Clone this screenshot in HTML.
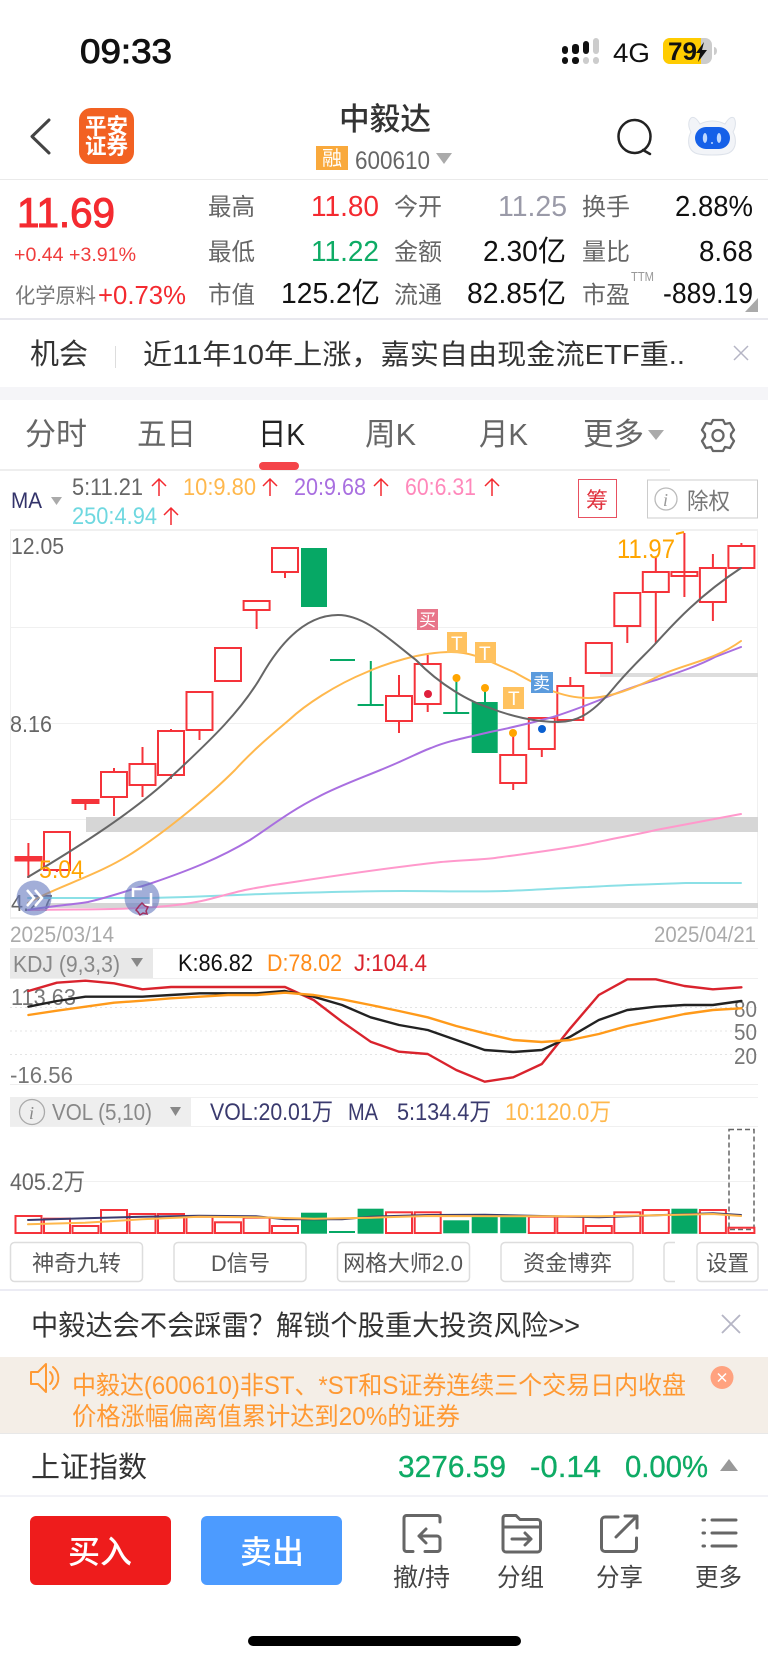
<!DOCTYPE html>
<html lang="zh-CN">
<head>
<meta charset="utf-8">
<title>中毅达</title>
<style>
html,body{margin:0;padding:0;background:#fff;width:768px;height:1663px;overflow:hidden}
svg{display:block;font-family:"Liberation Sans","Noto Sans CJK SC",sans-serif}
.ma{fill:none;stroke-width:2;stroke-linejoin:round;stroke-linecap:round}
.k{fill:none;stroke-width:2.400;stroke-linejoin:round;stroke-linecap:round}
</style>
</head>
<body>
<svg width="768" height="1663" viewBox="0 0 768 1663" xmlns="http://www.w3.org/2000/svg">
<rect width="768" height="1663" fill="#fff"/>

<!-- status bar -->
<text x="80" y="63" font-size="34" fill="#111" stroke="#111" stroke-width=".9" textLength="92" lengthAdjust="spacingAndGlyphs">09:33</text>
<g fill="#111">
<rect x="562" y="46" width="6" height="8" rx="3"/><rect x="562" y="57" width="6" height="7" rx="3"/>
<rect x="572" y="44" width="7" height="10" rx="3"/><rect x="572" y="57" width="7" height="7" rx="3"/>
<rect x="583" y="41" width="6" height="13" rx="3"/>
</g>
<g fill="#ccc">
<rect x="583" y="57" width="6" height="7" rx="3"/>
<rect x="593" y="38" width="6" height="16" rx="3"/><rect x="593" y="57" width="6" height="7" rx="3"/>
</g>
<text x="613" y="62" font-size="27" fill="#111" textLength="37" lengthAdjust="spacingAndGlyphs">4G</text>
<rect x="663" y="38" width="49" height="26" rx="7" fill="#ccc"/>
<path d="M670 38H701V64H670a7 7 0 0 1-7-7V45a7 7 0 0 1 7-7z" fill="#FFCC00"/>
<path d="M714 47a3 4 0 0 1 0 8z" fill="#ccc"/>
<text x="668" y="60" font-size="25" font-weight="700" fill="#111" textLength="29" lengthAdjust="spacingAndGlyphs">79</text>
<path d="M704 42L696 53H700L698 62L707 50H702z" fill="#111"/>

<!-- header -->
<path d="M49 120L32 136.500L49 153" fill="none" stroke="#444" stroke-width="3" stroke-linecap="round" stroke-linejoin="round"/>
<rect x="79" y="108" width="55" height="56" rx="12" fill="#F26122"/>
<text x="85" y="134" font-size="22" font-weight="700" fill="#fff" textLength="43" lengthAdjust="spacingAndGlyphs">平安</text>
<text x="85" y="154" font-size="22" font-weight="700" fill="#fff" textLength="43" lengthAdjust="spacingAndGlyphs">证券</text>
<text x="339" y="130" font-size="31" font-weight="500" fill="#333" textLength="92" lengthAdjust="spacingAndGlyphs">中毅达</text>
<rect x="316" y="146" width="32" height="24" fill="#F9A93C"/>
<text x="322" y="165" font-size="20" fill="#fff">融</text>
<text x="355" y="169" font-size="25" fill="#666" textLength="75" lengthAdjust="spacingAndGlyphs">600610</text>
<path d="M436 153H452L444 164z" fill="#aaa"/>
<ellipse cx="634.500" cy="136.500" rx="16" ry="16.500" fill="none" stroke="#222" stroke-width="2.500"/>
<path d="M643 150L650 154" stroke="#222" stroke-width="2.500" stroke-linecap="round"/>
<!-- robot -->
<path d="M691 118c3-2 6 1 9 6c8-4 17-4 25 0c3-5 6-8 9-6c2 3 2 9-1 14c3 5 3 12 1 16c-3 6-9 7-22 7s-19-1-22-7c-2-4-2-11 1-16c-3-5-3-11 0-14z" fill="#F2F4F8" stroke="#DDE2EA"/>
<rect x="695" y="127" width="35" height="22" rx="11" fill="#1560E8"/>
<ellipse cx="705" cy="138" rx="2.200" ry="5" fill="#BFD8FF"/>
<ellipse cx="719" cy="138" rx="2.200" ry="5" fill="#BFD8FF"/>
<circle cx="712" cy="143" r="1" fill="#BFD8FF"/>
<rect y="179" width="768" height="1" fill="#eaeaea"/>

<!-- quote -->
<text x="17" y="227" font-size="42" fill="#F42A30" stroke="#F42A30" stroke-width="1.100" textLength="98" lengthAdjust="spacingAndGlyphs">11.69</text>
<text x="14" y="261" font-size="19" fill="#F03C3C" textLength="122" lengthAdjust="spacingAndGlyphs">+0.44 +3.91%</text>
<text x="15" y="303" font-size="21" fill="#777" textLength="81" lengthAdjust="spacingAndGlyphs">化学原料</text>
<text x="98" y="304" font-size="26" fill="#F42A30" textLength="88" lengthAdjust="spacingAndGlyphs">+0.73%</text>
<g font-size="24" fill="#666">
<text x="208" y="215" textLength="47" lengthAdjust="spacingAndGlyphs">最高</text>
<text x="208" y="260" textLength="47" lengthAdjust="spacingAndGlyphs">最低</text>
<text x="208" y="303" textLength="47" lengthAdjust="spacingAndGlyphs">市值</text>
<text x="394" y="215" textLength="48" lengthAdjust="spacingAndGlyphs">今开</text>
<text x="394" y="260" textLength="48" lengthAdjust="spacingAndGlyphs">金额</text>
<text x="394" y="303" textLength="48" lengthAdjust="spacingAndGlyphs">流通</text>
<text x="582" y="215" textLength="48" lengthAdjust="spacingAndGlyphs">换手</text>
<text x="582" y="260" textLength="48" lengthAdjust="spacingAndGlyphs">量比</text>
<text x="582" y="303" textLength="48" lengthAdjust="spacingAndGlyphs">市盈</text>
</g>
<g font-size="29">
<text x="311" y="216" fill="#F42A30" textLength="68" lengthAdjust="spacingAndGlyphs">11.80</text>
<text x="311" y="261" fill="#0EAB65" textLength="68" lengthAdjust="spacingAndGlyphs">11.22</text>
<text x="281" y="303" fill="#111" textLength="99" lengthAdjust="spacingAndGlyphs">125.2亿</text>
<text x="498" y="216" fill="#9A9AA8" textLength="69" lengthAdjust="spacingAndGlyphs">11.25</text>
<text x="483" y="261" fill="#111" textLength="83" lengthAdjust="spacingAndGlyphs">2.30亿</text>
<text x="467" y="303" fill="#111" textLength="99" lengthAdjust="spacingAndGlyphs">82.85亿</text>
<text x="675" y="216" fill="#111" textLength="78" lengthAdjust="spacingAndGlyphs">2.88%</text>
<text x="699" y="261" fill="#111" textLength="54" lengthAdjust="spacingAndGlyphs">8.68</text>
<text x="663" y="303" fill="#111" textLength="90" lengthAdjust="spacingAndGlyphs">-889.19</text>
</g>
<text x="631" y="281" font-size="13" fill="#999" textLength="23" lengthAdjust="spacingAndGlyphs">TTM</text>
<path d="M745 312H758V298z" fill="#aaa"/>
<rect y="318" width="768" height="2" fill="#E8E8EE"/>

<!-- news -->
<text x="30" y="364" font-size="29" fill="#333" textLength="58" lengthAdjust="spacingAndGlyphs">机会</text>
<rect x="115" y="346" width="1" height="22" fill="#ddd"/>
<text x="143" y="364" font-size="28" fill="#333" textLength="542" lengthAdjust="spacingAndGlyphs">近11年10年上涨，嘉实自由现金流ETF重..</text>
<path d="M734 346L748 360M748 346L734 360" stroke="#B5B5C5" stroke-width="1.500"/>
<rect y="387" width="768" height="13" fill="#F5F5F8"/>

<!-- tabs -->
<g font-size="31" fill="#666">
<text x="25" y="445" textLength="62" lengthAdjust="spacingAndGlyphs">分时</text>
<text x="137" y="445" textLength="59" lengthAdjust="spacingAndGlyphs">五日</text>
<text x="258" y="445" fill="#222" textLength="47" lengthAdjust="spacingAndGlyphs">日K</text>
<text x="365" y="445" textLength="51" lengthAdjust="spacingAndGlyphs">周K</text>
<text x="479" y="445" textLength="49" lengthAdjust="spacingAndGlyphs">月K</text>
<text x="583" y="445" textLength="61" lengthAdjust="spacingAndGlyphs">更多</text>
</g>
<path d="M648 430H664L656 440z" fill="#aaa"/>
<path d="M713 420h10l2 4 5-1 4 7-3 4v3l3 4-4 7-5-1-2 4h-10l-2-4-5 1-4-7 3-4v-3l-3-4 4-7 5 1z" fill="none" stroke="#666" stroke-width="2.300" stroke-linejoin="round"/>
<circle cx="718" cy="435.500" r="5.500" fill="none" stroke="#666" stroke-width="2.300"/>
<rect y="469" width="670" height="2" fill="#eee"/>
<rect x="259" y="462" width="40" height="8" rx="4" fill="#F44449"/>

<!-- MA legend -->
<text x="11" y="508" font-size="22" fill="#33336A" textLength="31" lengthAdjust="spacingAndGlyphs">MA</text>
<path d="M51 497H62L56.500 505z" fill="#aaa"/>
<g font-size="24">
<text x="72" y="495" fill="#666" textLength="71" lengthAdjust="spacingAndGlyphs">5:11.21</text>
<text x="183" y="495" fill="#FFB84D" textLength="73" lengthAdjust="spacingAndGlyphs">10:9.80</text>
<text x="294" y="495" fill="#A96FE0" textLength="72" lengthAdjust="spacingAndGlyphs">20:9.68</text>
<text x="405" y="495" fill="#FF88BB" textLength="71" lengthAdjust="spacingAndGlyphs">60:6.31</text>
<text x="72" y="524" fill="#6FD8E0" textLength="85" lengthAdjust="spacingAndGlyphs">250:4.94</text>
</g>
<g fill="none" stroke="#F42A30" stroke-width="1.500">
<path d="M159 479V496M152 486L159 479L166 486"/>
<path d="M270 479V496M263 486L270 479L277 486"/>
<path d="M381 479V496M374 486L381 479L388 486"/>
<path d="M492 479V496M485 486L492 479L499 486"/>
<path d="M171 508V525M164 515L171 508L178 515"/>
</g>
<rect x="578.500" y="479.500" width="38" height="38" fill="#fff" stroke="#E85060"/>
<text x="586" y="508" font-size="22" fill="#E0303C">筹</text>
<rect x="647.500" y="480" width="110" height="38" fill="#fff" stroke="#ccc"/>
<circle cx="666" cy="499" r="11" fill="none" stroke="#bbb" stroke-width="1.300"/>
<text x="663" y="506" font-size="18" font-style="italic" font-family="Liberation Serif,serif" fill="#999">i</text>
<text x="687" y="509" font-size="23" fill="#777" textLength="43" lengthAdjust="spacingAndGlyphs">除权</text>

<!-- chart grid -->
<g fill="#F0F0F0">
<rect x="10" y="529" width="748" height="2"/>
<rect x="10" y="627" width="748" height="1"/>
<rect x="10" y="723" width="748" height="1"/>
<rect x="10" y="819" width="748" height="1"/>
<rect x="10" y="917" width="748" height="2"/>
<rect x="10" y="530" width="1" height="388"/>
<rect x="757" y="530" width="1" height="388"/>
</g>
<rect x="600" y="673" width="158" height="4" fill="#DDD"/>
<rect x="86" y="817" width="672" height="15" fill="#D6D6D6"/>
<rect x="48" y="903" width="710" height="5" fill="#D6D6D6"/>
<g font-size="23" fill="#666">
<text x="11" y="554" textLength="53" lengthAdjust="spacingAndGlyphs">12.05</text>
<text x="10" y="732" textLength="42" lengthAdjust="spacingAndGlyphs">8.16</text>
<text x="11" y="911" textLength="42" lengthAdjust="spacingAndGlyphs">4.27</text>
</g>

<!-- candles -->
<g stroke="#F5333A" stroke-width="2" fill="none">
<path d="M28.400 843V878M56.900 870V872M85.400 803V810M114 768V772M114 797V816M142.500 747V764M142.500 785V797M171 729V731M171 775V779M199.500 730V740M256.600 610V629M285 572V578M399 675V696M399 721V733M427.700 655V664M427.700 704V712M513.200 783V790M513.200 733V755M541.800 749V757M570.300 677V686M627.300 626V643M655.800 557V572M655.800 592V643M684.400 533V597M712.900 554V568M712.900 602V621M741.400 543V546"/>
<path d="M676 534L684 532" stroke="#FFA500"/>
<rect x="15.500" y="857" width="26" height="3.500" fill="#F5333A"/>
<rect x="44" y="832" width="26" height="38"/>
<rect x="72.500" y="800" width="26" height="3" fill="#F5333A"/>
<rect x="101" y="772" width="26" height="25"/>
<rect x="129.500" y="764" width="26" height="21"/>
<rect x="158" y="731" width="26" height="44"/>
<rect x="186.500" y="692" width="26" height="38"/>
<rect x="215" y="648" width="26" height="33"/>
<rect x="243.600" y="601" width="26" height="9"/>
<rect x="272" y="548" width="26" height="24"/>
<rect x="386" y="696" width="26" height="25"/>
<rect x="414.700" y="664" width="26" height="40"/>
<rect x="500.200" y="755" width="26" height="28"/>
<rect x="528.800" y="718" width="26" height="31"/>
<rect x="557.300" y="686" width="26" height="34"/>
<rect x="585.800" y="643" width="26" height="30"/>
<rect x="614.300" y="593" width="26" height="33"/>
<rect x="642.800" y="572" width="26" height="20"/>
<rect x="671.400" y="572" width="26" height="4"/>
<rect x="699.900" y="568" width="26" height="34"/>
<rect x="728.400" y="546" width="26" height="22"/>
</g>
<g fill="#06A865">
<rect x="301" y="548" width="26" height="59"/>
<rect x="471.700" y="702" width="26" height="51"/>
<rect x="330" y="659" width="25" height="2"/>
<rect x="357.600" y="704" width="26" height="2"/>
<rect x="369.800" y="661" width="2" height="44"/>
<rect x="443.200" y="712" width="26" height="2"/>
<rect x="455.400" y="680" width="2" height="33"/>
<rect x="484" y="690" width="2" height="12"/>
</g>

<!-- MA lines -->
<path class="ma" stroke="#8BE0E6" d="M28 898L147 898C200 897 250 894 294 893C330 892 370 891 402 891C440 891 475 892 504 891C535 890 560 888 588 887C620 885 655 884 686 883L741 883"/>
<path class="ma" stroke="#FF99CC" d="M28 910C70 909 105 910 137 908C160 907 185 905 206 900C225 895 240 891 245 890C260 887 280 884 294 882C340 875 395 867 441 862C460 860 480 860 495 858C530 853 565 849 593 843C615 838 635 835 656 830L741 814"/>
<path class="ma" stroke="#A96FE0" d="M28 910C50 906 70 905 88 902C110 897 130 890 152 883C190 870 220 858 250 840C270 827 290 811 318 797C340 785 370 775 397 763C415 755 425 750 431 748C450 740 470 737 490 732C515 727 535 722 553 717C575 710 595 702 612 695C630 688 645 683 656 680C680 672 700 665 715 657L741 647"/>
<path class="ma" stroke="#FFB84D" d="M28 903C60 885 100 875 137 850C170 828 210 795 235 770C255 748 275 732 289 720C305 705 335 685 367 672C385 664 420 652 451 652C475 652 490 662 514 672C535 684 560 698 588 698C610 698 635 688 661 675C685 664 715 660 741 641"/>
<path class="ma" stroke="#666" d="M28 877C70 852 130 815 171 777C212 739 242 710 262 675C285 635 310 615 338 615C365 615 390 640 416 660C440 685 470 702 490 708C510 716 535 722 558 722C575 722 590 716 612 690C630 668 645 655 656 643C675 622 700 595 741 568"/>

<!-- signal labels -->
<rect x="417" y="609" width="21" height="21" fill="#E8758A"/>
<text x="419" y="626" font-size="17" fill="#fff">买</text>
<g fill="#FFC25F">
<rect x="447" y="632" width="20" height="21"/>
<rect x="475" y="642" width="21" height="21"/>
<rect x="503" y="687" width="21" height="22"/>
</g>
<g font-size="19" fill="#fff">
<text x="451" y="650">T</text>
<text x="479" y="660">T</text>
<text x="508" y="705">T</text>
</g>
<rect x="531" y="672" width="22" height="21" fill="#5B9BDD"/>
<text x="533" y="689" font-size="17" fill="#fff">卖</text>
<circle cx="428" cy="694" r="4" fill="#E0203C"/>
<circle cx="456.500" cy="678" r="4" fill="#FFA500"/>
<circle cx="485" cy="688" r="4" fill="#FFA500"/>
<circle cx="513" cy="733" r="4" fill="#FFA500"/>
<circle cx="542" cy="729" r="4" fill="#0A5FD0"/>
<text x="617" y="558" font-size="27" fill="#FFA500" textLength="58" lengthAdjust="spacingAndGlyphs">11.97</text>
<text x="39" y="878" font-size="25" fill="#FFA500" textLength="45" lengthAdjust="spacingAndGlyphs">5.04</text>

<!-- float buttons -->
<circle cx="34" cy="898" r="17.500" fill="#6478BE" fill-opacity=".6"/>
<path d="M27 890L34 898L27 906M35 890L42 898L35 906" fill="none" stroke="#fff" stroke-width="2.500"/>
<circle cx="142" cy="898" r="17.500" fill="#6478BE" fill-opacity=".6"/>
<path d="M133 897V889H142M151 893V905H144" fill="none" stroke="#fff" stroke-width="2.500"/>
<path d="M139 906l3-3 3 3 3 1-2 4 1 3-4-1-3 2-2-3-2-2z" fill="none" stroke="#A03060" stroke-width="1.500"/>

<g font-size="22" fill="#AAA">
<text x="10" y="942" textLength="104" lengthAdjust="spacingAndGlyphs">2025/03/14</text>
<text x="654" y="942" textLength="102" lengthAdjust="spacingAndGlyphs">2025/04/21</text>
</g>

<!-- KDJ -->
<rect x="10" y="948" width="748" height="1" fill="#F0F0F0"/>
<rect x="10" y="948" width="143" height="30" fill="#E8E8E8"/>
<text x="13" y="972" font-size="23" fill="#888" textLength="107" lengthAdjust="spacingAndGlyphs">KDJ (9,3,3)</text>
<path d="M131 958H143L137 967z" fill="#888"/>
<g font-size="24">
<text x="178" y="971" fill="#111" textLength="75" lengthAdjust="spacingAndGlyphs">K:86.82</text>
<text x="267" y="971" fill="#FF8C1A" textLength="75" lengthAdjust="spacingAndGlyphs">D:78.02</text>
<text x="354" y="971" fill="#D9232D" textLength="73" lengthAdjust="spacingAndGlyphs">J:104.4</text>
</g>
<rect x="10" y="978" width="748" height="1" fill="#F0F0F0"/>
<rect x="10" y="1084" width="748" height="1" fill="#EEE"/>
<g stroke="#E4E4E4" stroke-dasharray="2 3" stroke-width="1">
<path d="M10 1007.500H758M10 1031H758M10 1054.500H758"/>
</g>
<g font-size="23" fill="#777">
<text x="11" y="1005" textLength="65" lengthAdjust="spacingAndGlyphs">113.63</text>
<text x="10" y="1083" textLength="63" lengthAdjust="spacingAndGlyphs">-16.56</text>
<text x="734" y="1017" textLength="23" lengthAdjust="spacingAndGlyphs">80</text>
<text x="734" y="1040" textLength="23" lengthAdjust="spacingAndGlyphs">50</text>
<text x="734" y="1064" textLength="23" lengthAdjust="spacingAndGlyphs">20</text>
</g>
<polyline class="k" stroke="#D9232D" points="28.400,991 56.900,982.700 85.400,980.700 114,983.300 142.500,989.300 171,987 199.500,987 228,987 256.600,987 285,987 313.600,1000 342,1021.700 370.600,1041.700 399,1051.700 427.700,1054 456.200,1070 484.700,1081.700 513.200,1077.300 541.800,1064 570.300,1028.300 598.800,995 627.300,979.300 655.800,979.300 684.400,986 712.900,989.300 741.400,987.300"/>
<polyline class="k" stroke="#222" points="28.400,1006.700 56.900,1001 85.400,996.700 114,996.700 142.500,996.700 171,995 199.500,993.300 228,993.300 256.600,993.300 285,991 313.600,996.700 342,1005 370.600,1017.300 399,1025 427.700,1030 456.200,1040 484.700,1050 513.200,1052 541.800,1050 570.300,1036.700 598.800,1020 627.300,1010 655.800,1006.700 684.400,1005 712.900,1005 741.400,1001"/>
<polyline class="k" stroke="#FF9A1A" points="28.400,1015 56.900,1010.700 85.400,1006.700 114,1002.700 142.500,1000.700 171,998.300 199.500,996.700 228,995 256.600,995 285,992.700 313.600,995 342,999.300 370.600,1005 399,1011 427.700,1017.300 456.200,1026 484.700,1033.300 513.200,1040 541.800,1042 570.300,1040 598.800,1034 627.300,1026 655.800,1020 684.400,1014 712.900,1010 741.400,1008.300"/>

<!-- VOL -->
<rect x="10" y="1097" width="748" height="1" fill="#F0F0F0"/>
<rect x="10" y="1097" width="181" height="29" fill="#EEE"/>
<circle cx="32" cy="1112" r="12.500" fill="none" stroke="#aaa" stroke-width="1.300"/>
<text x="29" y="1119" font-size="18" font-style="italic" font-family="Liberation Serif,serif" fill="#888">i</text>
<text x="52" y="1120" font-size="23" fill="#888" textLength="100" lengthAdjust="spacingAndGlyphs">VOL (5,10)</text>
<path d="M170 1107H181L175.500 1116z" fill="#888"/>
<g font-size="24">
<text x="210" y="1120" fill="#3A3A6E" textLength="123" lengthAdjust="spacingAndGlyphs">VOL:20.01万</text>
<text x="348" y="1120" fill="#3A3A6E" textLength="30" lengthAdjust="spacingAndGlyphs">MA</text>
<text x="397" y="1120" fill="#3A3A6E" textLength="94" lengthAdjust="spacingAndGlyphs">5:134.4万</text>
<text x="505" y="1120" fill="#FFB84D" textLength="106" lengthAdjust="spacingAndGlyphs">10:120.0万</text>
</g>
<rect x="10" y="1126" width="748" height="1" fill="#F0F0F0"/>
<rect x="10" y="1181" width="748" height="1" fill="#F0F0F0"/>
<text x="10" y="1190" font-size="24" fill="#666" textLength="75" lengthAdjust="spacingAndGlyphs">405.2万</text>
<rect x="729" y="1129.500" width="25" height="100" fill="none" stroke="#666" stroke-width="1.500" stroke-dasharray="5 3"/>
<g fill="none" stroke="#F5333A" stroke-width="2">
<rect x="15.500" y="1216" width="26" height="17"/>
<rect x="44" y="1218.700" width="26" height="14.300"/>
<rect x="72.500" y="1226" width="26" height="7"/>
<rect x="101" y="1210" width="26" height="23"/>
<rect x="129.500" y="1214" width="26" height="19"/>
<rect x="158" y="1214" width="26" height="19"/>
<rect x="186.500" y="1216.700" width="26" height="16.300"/>
<rect x="215" y="1222.300" width="26" height="10.700"/>
<rect x="243.600" y="1217.700" width="26" height="15.300"/>
<rect x="272" y="1226" width="26" height="7"/>
<rect x="386" y="1212.300" width="26" height="20.700"/>
<rect x="414.700" y="1212.300" width="26" height="20.700"/>
<rect x="528.800" y="1216.700" width="26" height="16.300"/>
<rect x="557.300" y="1216.700" width="26" height="16.300"/>
<rect x="585.800" y="1226" width="26" height="7"/>
<rect x="614.300" y="1212.300" width="26" height="20.700"/>
<rect x="642.800" y="1210" width="26" height="23"/>
<rect x="699.900" y="1210" width="26" height="23"/>
<rect x="728.400" y="1227.700" width="26" height="5.300"/>
</g>
<g fill="#06A865">
<rect x="301" y="1212.700" width="26" height="21"/>
<rect x="329" y="1231" width="26" height="2"/>
<rect x="357.600" y="1208.700" width="26" height="25"/>
<rect x="443.200" y="1220.300" width="26" height="13"/>
<rect x="471.700" y="1216.700" width="26" height="16.500"/>
<rect x="500.200" y="1216.700" width="26" height="16.500"/>
<rect x="671.400" y="1208.700" width="26" height="25"/>
</g>
<polyline class="ma" stroke="#3A3A6E" points="28,1220 85,1218.300 142,1216.700 199,1215.700 256,1216.300 285,1219.300 342,1219.300 371,1216.700 428,1215 485,1214.700 542,1216 599,1217.300 656,1215.300 713,1213.300 741,1215"/>
<polyline class="ma" stroke="#FFB84D" points="28,1224.300 85,1222.700 142,1219.300 199,1216.700 256,1217.300 314,1218.700 371,1217.700 428,1216 513,1216.300 599,1216.300 656,1215.300 713,1214 741,1216"/>

<!-- function buttons -->
<g fill="#fff" stroke="#DDD" stroke-width="1.500">
<rect x="10.500" y="1242.500" width="132" height="39" rx="4"/>
<rect x="174" y="1242.500" width="132" height="39" rx="4"/>
<rect x="337.500" y="1242.500" width="132" height="39" rx="4"/>
<rect x="501" y="1242.500" width="132" height="39" rx="4"/>
<path d="M675 1242.500H668a4 4 0 0 0-4 4V1277.500a4 4 0 0 0 4 4H675"/>
<rect x="697" y="1242.500" width="61" height="39" rx="4"/>
</g>
<g font-size="22" fill="#555">
<text x="32" y="1271" textLength="89" lengthAdjust="spacingAndGlyphs">神奇九转</text>
<text x="211" y="1271" textLength="59" lengthAdjust="spacingAndGlyphs">D信号</text>
<text x="343" y="1271" textLength="120" lengthAdjust="spacingAndGlyphs">网格大师2.0</text>
<text x="523" y="1271" textLength="89" lengthAdjust="spacingAndGlyphs">资金博弈</text>
<text x="706" y="1271" textLength="43" lengthAdjust="spacingAndGlyphs">设置</text>
</g>
<rect y="1289" width="768" height="2" fill="#ECECF4"/>

<!-- risk banner -->
<text x="31" y="1335" font-size="28" fill="#333" textLength="549" lengthAdjust="spacingAndGlyphs">中毅达会不会踩雷？解锁个股重大投资风险&gt;&gt;</text>
<path d="M722 1315L740 1333M740 1315L722 1333" stroke="#B5B5C5" stroke-width="1.800"/>

<!-- notice -->
<rect y="1357" width="768" height="76" fill="#F4EEE7"/>
<path d="M31 1372H38L46 1364V1392L38 1384H31z" fill="none" stroke="#FF9933" stroke-width="2" stroke-linejoin="round"/>
<path d="M50 1372a8 8 0 0 1 0 12M53 1367a14 14 0 0 1 0 22" fill="none" stroke="#FF9933" stroke-width="2" stroke-linecap="round"/>
<text x="72" y="1394" font-size="25" fill="#FF9933" textLength="614" lengthAdjust="spacingAndGlyphs">中毅达(600610)非ST、*ST和S证券连续三个交易日内收盘</text>
<text x="72" y="1425" font-size="25" fill="#FF9933" textLength="388" lengthAdjust="spacingAndGlyphs">价格涨幅偏离值累计达到20%的证券</text>
<circle cx="722" cy="1377.500" r="11.500" fill="#FFA27F"/>
<path d="M718 1373.500L726 1381.500M726 1373.500L718 1381.500" stroke="#fff" stroke-width="1.500"/>
<rect y="1433" width="768" height="1" fill="#E8E8E8"/>

<!-- index -->
<text x="31" y="1477" font-size="29" fill="#333" textLength="116" lengthAdjust="spacingAndGlyphs">上证指数</text>
<g font-size="31" fill="#0EAB65" stroke="#0EAB65" stroke-width=".3">
<text x="398" y="1477" textLength="108" lengthAdjust="spacingAndGlyphs">3276.59</text>
<text x="530" y="1477" textLength="71" lengthAdjust="spacingAndGlyphs">-0.14</text>
<text x="625" y="1477" textLength="83" lengthAdjust="spacingAndGlyphs">0.00%</text>
</g>
<path d="M720 1471H738L729 1459z" fill="#999"/>
<rect y="1495" width="768" height="2" fill="#F2F2F7"/>

<!-- bottom bar -->
<rect x="30" y="1516" width="141" height="69" rx="6" fill="#EE1C1C"/>
<rect x="201" y="1516" width="141" height="69" rx="6" fill="#4C9BFF"/>
<text x="68" y="1563" font-size="32" fill="#fff" font-weight="500" textLength="64" lengthAdjust="spacingAndGlyphs">买入</text>
<text x="240" y="1563" font-size="32" fill="#fff" font-weight="500" textLength="64" lengthAdjust="spacingAndGlyphs">卖出</text>

<g fill="none" stroke="#666" stroke-width="3" stroke-linecap="round" stroke-linejoin="round">
<path d="M440 1522V1518a2.500 2.500 0 0 0-2.500-2.500H406.500a2.500 2.500 0 0 0-2.500 2.500V1549a2.500 2.500 0 0 0 2.500 2.500H413"/>
<path d="M426 1529L419 1536L426 1543M419 1536H437a3 3 0 0 1 3 3V1549a2.500 2.500 0 0 1-2.500 2.500H425"/>
<path d="M503 1518a2.500 2.500 0 0 1 2.500-2.500H516L520 1519.500H537.500a3 3 0 0 1 3 3V1549a3 3 0 0 1-3 3H506a3 3 0 0 1-3-3zM503 1527H540"/>
<path d="M512 1539H531M525 1533L531 1539L525 1545"/>
<path d="M618 1517H605a3.500 3.500 0 0 0-3.500 3.500V1548a3.500 3.500 0 0 0 3.500 3.500H633a3.500 3.500 0 0 0 3.500-3.500V1538"/>
<path d="M616 1537L636.500 1516.500M625 1516H637V1528"/>
<path d="M712 1520H736M712 1533H736M712 1546H736"/>
<path d="M703 1520H704.500M703 1533H704.500M703 1546H704.500"/>
</g>
<g font-size="25" fill="#444">
<text x="393" y="1586" textLength="57" lengthAdjust="spacingAndGlyphs">撤/持</text>
<text x="497" y="1586" textLength="47" lengthAdjust="spacingAndGlyphs">分组</text>
<text x="596" y="1586" textLength="47" lengthAdjust="spacingAndGlyphs">分享</text>
<text x="695" y="1586" textLength="47" lengthAdjust="spacingAndGlyphs">更多</text>
</g>
<rect x="248" y="1636" width="273" height="10" rx="5" fill="#000"/>
</svg>
</body>
</html>
